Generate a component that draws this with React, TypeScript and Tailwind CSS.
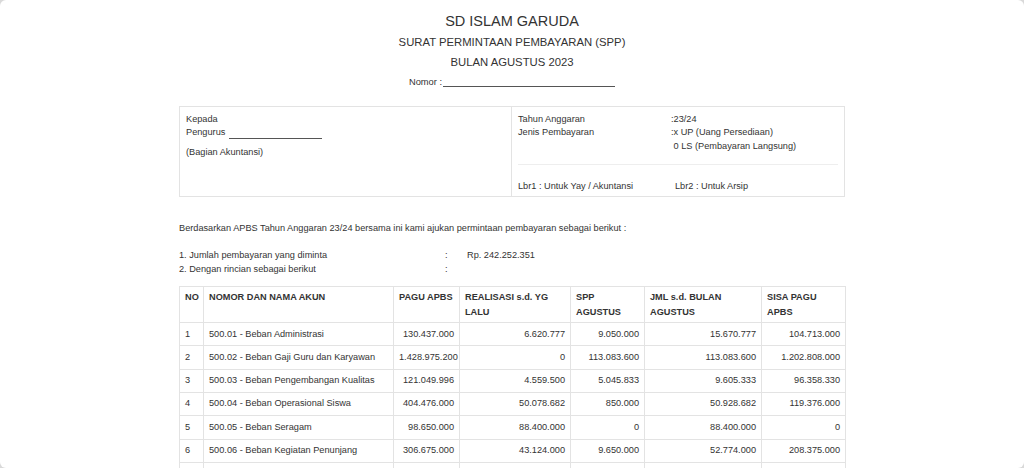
import React from "react";

const rows = [
  { no: "1", akun: "500.01 - Beban Administrasi", pagu: "130.437.000", real: "6.620.777", spp: "9.050.000", jml: "15.670.777", sisa: "104.713.000" },
  { no: "2", akun: "500.02 - Beban Gaji Guru dan Karyawan", pagu: "1.428.975.200", real: "0", spp: "113.083.600", jml: "113.083.600", sisa: "1.202.808.000" },
  { no: "3", akun: "500.03 - Beban Pengembangan Kualitas", pagu: "121.049.996", real: "4.559.500", spp: "5.045.833", jml: "9.605.333", sisa: "96.358.330" },
  { no: "4", akun: "500.04 - Beban Operasional Siswa", pagu: "404.476.000", real: "50.078.682", spp: "850.000", jml: "50.928.682", sisa: "119.376.000" },
  { no: "5", akun: "500.05 - Beban Seragam", pagu: "98.650.000", real: "88.400.000", spp: "0", jml: "88.400.000", sisa: "0" },
  { no: "6", akun: "500.06 - Beban Kegiatan Penunjang", pagu: "306.675.000", real: "43.124.000", spp: "9.650.000", jml: "52.774.000", sisa: "208.375.000" },
];

const th = "border border-[#e3e3e3] px-[5px] pt-[3px] text-left align-top font-bold leading-[14.5px]";
const td = "border border-[#e3e3e3] px-[5px] py-0 align-middle";

export default function App() {
  return (
    <div className="h-[468px] overflow-hidden bg-[#d9d9d9] font-['Liberation_Sans',Arial,sans-serif] text-[#333]">
      <div className="h-full overflow-hidden rounded-[6px] bg-white">
        <div className="mx-auto w-[666px]">
          {/* kop surat */}
          <div className="pt-[11px] text-center">
            <h1 className="text-[14.5px] leading-[20px]">SD ISLAM GARUDA</h1>
            <h2 className="mt-[3px] text-[11.3px] leading-[16px]">SURAT PERMINTAAN PEMBAYARAN (SPP)</h2>
            <h3 className="mt-[4px] text-[11.3px] leading-[16px]">BULAN AGUSTUS 2023</h3>
            <div className="mt-[5px] flex items-end justify-center text-[9.3px] leading-[14px]">
              <span className="mr-[1px]">Nomor :</span>
              <span className="mb-[2px] inline-block w-[172px] border-b border-[#555]" />
            </div>
          </div>

          {/* kepada / jenis pembayaran */}
          <div className="mt-[17px] grid grid-cols-2 border border-[#e3e3e3] text-[9.2px] leading-[13.3px]">
            <div className="border-r border-[#e3e3e3] px-[6px] pt-[6px]">
              <div>Kepada</div>
              <div className="flex items-end">
                <span>Pengurus</span>
                <span className="mb-[1px] ml-[4px] inline-block w-[93px] border-b border-[#555]" />
              </div>
              <div className="mt-[6px]">(Bagian Akuntansi)</div>
            </div>
            <div className="px-[6px] pb-[3px] pt-[6px]">
              <div className="grid grid-cols-[153px_1fr]">
                <div>Tahun Anggaran</div>
                <div>:23/24</div>
                <div>Jenis Pembayaran</div>
                <div>:x UP (Uang Persediaan)</div>
                <div />
                <div>&nbsp;0 LS (Pembayaran Langsung)</div>
              </div>
              <div className="mt-[11px] border-t border-[#eee] pt-[15px]">
                <div className="grid grid-cols-[157px_1fr]">
                  <div>Lbr1 : Untuk Yay / Akuntansi</div>
                  <div>Lbr2 : Untuk Arsip</div>
                </div>
              </div>
            </div>
          </div>

          {/* pengantar */}
          <div className="mt-[25px] text-[9.2px] leading-[13.3px]">
            <p>Berdasarkan APBS Tahun Anggaran 23/24 bersama ini kami ajukan permintaan pembayaran sebagai berikut :</p>
            <div className="mt-[14px] grid grid-cols-[266px_22px_1fr]">
              <div>1. Jumlah pembayaran yang diminta</div>
              <div>:</div>
              <div>Rp. 242.252.351</div>
              <div>2. Dengan rincian sebagai berikut</div>
              <div>:</div>
              <div />
            </div>
          </div>

          {/* rincian */}
          <table className="mt-[10px] w-[666px] table-fixed border-collapse text-[9.2px] leading-[13.3px]">
            <colgroup>
              <col className="w-[24px]" />
              <col className="w-[190px]" />
              <col className="w-[66px]" />
              <col className="w-[111px]" />
              <col className="w-[74px]" />
              <col className="w-[117px]" />
              <col className="w-[84px]" />
            </colgroup>
            <thead>
              <tr className="h-[36px]">
                <th className={th}>NO</th>
                <th className={th}>NOMOR DAN NAMA AKUN</th>
                <th className={th}>PAGU APBS</th>
                <th className={th}>REALISASI s.d. YG<br />LALU</th>
                <th className={th}>SPP<br />AGUSTUS</th>
                <th className={th}>JML s.d. BULAN<br />AGUSTUS</th>
                <th className={th}>SISA PAGU<br />APBS</th>
              </tr>
            </thead>
            <tbody>
              {rows.map((r) => (
                <tr key={r.no} className="h-[23.3px]">
                  <td className={td}>{r.no}</td>
                  <td className={td}>{r.akun}</td>
                  <td className={td + " text-right"}>{r.pagu}</td>
                  <td className={td + " text-right"}>{r.real}</td>
                  <td className={td + " text-right"}>{r.spp}</td>
                  <td className={td + " text-right"}>{r.jml}</td>
                  <td className={td + " text-right"}>{r.sisa}</td>
                </tr>
              ))}
              <tr className="h-[23.3px]">
                <td className={td} />
                <td className={td} />
                <td className={td} />
                <td className={td} />
                <td className={td} />
                <td className={td} />
                <td className={td} />
              </tr>
            </tbody>
          </table>
        </div>
      </div>
    </div>
  );
}
